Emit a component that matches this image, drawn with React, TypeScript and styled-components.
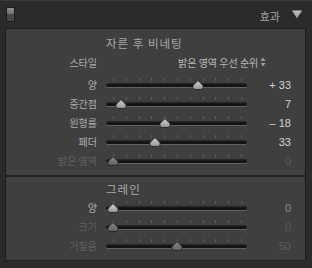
import React from "react";
import styled, { createGlobalStyle } from "styled-components";

const Global = createGlobalStyle`
  html, body { margin: 0; padding: 0; background: #2b2b2b; }
  body { width: 312px; height: 268px; overflow: hidden; }
  #root { width: 312px; height: 268px; }
`;

const KR = `"Noto Sans CJK KR", "Noto Sans", sans-serif`;
const NUM = `"Liberation Sans", "DejaVu Sans", sans-serif`;

const Frame = styled.div`
  width: 312px;
  height: 268px;
  background: #2b2b2b;
  border-top: 1px solid #3a3a3a;
  box-sizing: border-box;
  display: flex;
  flex-direction: column;
`;

const Header = styled.div`
  height: 27px;
  display: flex;
  align-items: center;
  padding: 0 10px 0 6px;
  box-sizing: border-box;
`;

const Toggle = styled.div`
  width: 9px;
  height: 15px;
  box-sizing: border-box;
  border: 1px solid #1b1b1b;
  background: linear-gradient(#8e8e8e 0%, #6e6e6e 50%, #4a4a4a 50%, #454545 100%);
  margin-top: -1px;
`;

const HeaderTitle = styled.span`
  margin-left: auto;
  font-family: ${KR};
  font-size: 11px;
  color: #a2a2a2;
  margin-right: 12px;
  margin-top: 2px;
`;

const Panel = styled.div`
  margin: 0 6px 0 5px;
  border: 1px solid #1c1c1c;
  background: #3f3f3f;
  display: flex;
  flex-direction: column;
`;

const Section = styled.div<{ $top: number; $bottom: number; $divider?: boolean }>`
  padding-top: ${(p) => p.$top}px;
  padding-bottom: ${(p) => p.$bottom}px;
  border-bottom: ${(p) => (p.$divider ? "2px solid #222" : "none")};
`;

const Title = styled.div`
  height: 18px;
  display: flex;
  align-items: center;
  padding-left: 100px;
  font-family: ${KR};
  font-size: 11.5px;
  letter-spacing: 1px;
  color: #a9a9a9;
`;

const Row = styled.div<{ $h: number; $mb?: number }>`
  height: ${(p) => p.$h}px;
  margin-bottom: ${(p) => p.$mb ?? 0}px;
  display: grid;
  grid-template-columns: 91px 141px 35px;
  column-gap: 9px;
  align-items: center;
`;

const Label = styled.span<{ $dim?: boolean }>`
  text-align: right;
  font-family: ${KR};
  font-size: 10px;
  color: ${(p) => (p.$dim ? "#5f5f5f" : "#adadad")};
  white-space: nowrap;
`;

const Choice = styled.span`
  grid-column: 2 / 4;
  padding-left: 72px;
  display: flex;
  align-items: center;
  gap: 2px;
  font-family: ${KR};
  font-size: 10px;
  color: #b9b9b9;
  white-space: nowrap;
`;

const Value = styled.span<{ $tone: "hi" | "mid" | "dim" }>`
  text-align: right;
  font-family: ${NUM};
  font-size: 11px;
  color: ${(p) => (p.$tone === "hi" ? "#d2d2d2" : p.$tone === "mid" ? "#929292" : "#5c5c5c")};
  white-space: pre;
`;

const SliderBox = styled.div`
  position: relative;
  width: 141px;
  height: 100%;
`;

const Track = styled.div`
  position: absolute;
  left: 0;
  right: 0;
  top: 50%;
  margin-top: -2px;
  height: 4px;
  border-radius: 2px;
  background: linear-gradient(#2a2a2a, #111 60%, #161616);
  box-shadow: 0 1px 0 #626262;
`;

const Ticks = styled.svg`
  position: absolute;
  left: 0;
  top: 50%;
  margin-top: -7px;
`;

const Thumb = styled.svg`
  position: absolute;
  top: 50%;
  margin-top: -5px;
  margin-left: -6px;
`;

const UpDown = () => (
  <svg width="6" height="10" viewBox="0 0 6 10">
    <path d="M3 0.5 L5.5 4 H0.5 Z" fill="#9a9a9a" />
    <path d="M3 9.5 L5.5 6 H0.5 Z" fill="#9a9a9a" />
  </svg>
);

const DownTriangle = () => (
  <svg width="10" height="9" viewBox="0 0 10 9">
    <defs>
      <linearGradient id="tri" x1="0" y1="0" x2="0" y2="1">
        <stop offset="0" stopColor="#c4c4c4" />
        <stop offset="1" stopColor="#8e8e8e" />
      </linearGradient>
    </defs>
    <path d="M0 0.5 H10 L5 8.5 Z" fill="url(#tri)" />
  </svg>
);

type SliderProps = { frac: number; dim?: boolean };

const Slider = ({ frac, dim }: SliderProps) => {
  const ticks = Array.from({ length: 11 }, (_, i) => 7 + i * 12.8);
  const x = 6.5 + frac * 128.5;
  const gid = dim ? "thumbDim" : "thumbHi";
  return (
    <SliderBox>
      <Ticks width="141" height="4" viewBox="0 0 141 4">
        {ticks.map((t) => (
          <rect key={t} x={Math.round(t)} y="0" width="1" height="3" fill="#5e5e5e" />
        ))}
      </Ticks>
      <Track />
      <Thumb width="12" height="10" viewBox="0 0 12 10" style={{ left: `${x}px` }}>
        <defs>
          <linearGradient id="thumbHi" x1="0" y1="0" x2="0" y2="1">
            <stop offset="0" stopColor="#d0d0d0" />
            <stop offset="1" stopColor="#979797" />
          </linearGradient>
          <linearGradient id="thumbDim" x1="0" y1="0" x2="0" y2="1">
            <stop offset="0" stopColor="#888" />
            <stop offset="1" stopColor="#626262" />
          </linearGradient>
        </defs>
        <path
          d="M6 0.6 L10.6 5 Q11.4 5.8 11.2 7.2 Q10.9 9.4 9 9.4 H3 Q1.1 9.4 0.8 7.2 Q0.6 5.8 1.4 5 Z"
          fill={`url(#${gid})`}
          stroke="#232323"
          strokeWidth="0.9"
        />
      </Thumb>
    </SliderBox>
  );
};

type RowData = {
  label: string;
  frac: number;
  value: string;
  labelDim?: boolean;
  thumbDim?: boolean;
  tone: "hi" | "mid" | "dim";
};

const vignette: RowData[] = [
  { label: "양", frac: 0.665, value: "+ 33", tone: "hi" },
  { label: "중간점", frac: 0.07, value: "7", tone: "hi" },
  { label: "원형률", frac: 0.41, value: "– 18", tone: "hi" },
  { label: "페더", frac: 0.33, value: "33", tone: "hi" },
  { label: "밝은 영역", frac: 0, value: "0", labelDim: true, thumbDim: true, tone: "dim" },
];

const grain: RowData[] = [
  { label: "양", frac: 0, value: "0", tone: "mid" },
  { label: "크기", frac: 0, value: "0", labelDim: true, thumbDim: true, tone: "dim" },
  { label: "거칠음", frac: 0.5, value: "50", labelDim: true, thumbDim: true, tone: "dim" },
];

const SliderRow = ({ r }: { r: RowData }) => (
  <Row $h={19}>
    <Label $dim={r.labelDim}>{r.label}</Label>
    <Slider frac={r.frac} dim={r.thumbDim} />
    <Value $tone={r.tone}>{r.value}</Value>
  </Row>
);

export default function App() {
  return (
    <>
      <Global />
      <Frame>
        <Header>
          <Toggle />
          <HeaderTitle>효과</HeaderTitle>
          <DownTriangle />
        </Header>
        <Panel>
          <Section $top={5} $bottom={5} $divider>
            <Title>자른 후 비네팅</Title>
            <Row $h={20} $mb={3}>
              <Label>스타일</Label>
              <Choice>
                밝은 영역 우선 순위
                <UpDown />
              </Choice>
            </Row>
            {vignette.map((r) => (
              <SliderRow key={r.label} r={r} />
            ))}
          </Section>
          <Section $top={3} $bottom={5}>
            <Title>그레인</Title>
            {grain.map((r) => (
              <SliderRow key={r.label} r={r} />
            ))}
          </Section>
        </Panel>
      </Frame>
    </>
  );
}
